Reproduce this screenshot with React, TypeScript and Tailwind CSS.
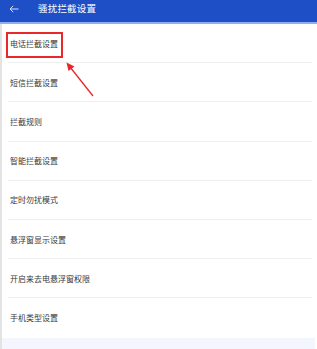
import React from "react";

const items = [
  "电话拦截设置",
  "短信拦截设置",
  "拦截规则",
  "智能拦截设置",
  "定时勿扰模式",
  "悬浮窗显示设置",
  "开启来去电悬浮窗权限",
  "手机类型设置",
];

export default function App() {
  return (
    <div
      className="relative w-[317px] h-[349px] overflow-hidden bg-white flex flex-col"
      style={{ fontFamily: '"Noto Sans CJK SC", "Noto Sans", sans-serif' }}
    >
      <div className="h-[24px] shrink-0 bg-[#1f4fc7] border-b-2 border-[#8eaef0] flex items-center pb-[4px]">
        <span className="ml-[9px] w-[10px] flex items-center">
          <svg width="10" height="8" viewBox="0 0 10 8" fill="none">
            <path d="M9.5 4H1M4.2 0.8L1 4L4.2 7.2" stroke="#d6e0f7" strokeWidth="1" />
          </svg>
        </span>
        <span className="ml-[19px] text-white text-[9.5px] leading-none tracking-[0.2px]">骚扰拦截设置</span>
      </div>
      <div className="flex-1 flex border-l-2 border-[#e3e3e3] border-r-2 border-r-white">
        <div className="flex-1 flex flex-col">
          <div className="flex flex-col">
            {items.map((t, i) => (
              <div key={t} className="h-[39.2px] flex flex-col pl-[6px] pr-[3px]">
                <div className="flex-1 flex items-center pl-[2px] text-[8px] text-[#383838] leading-none pt-[1px]">
                  {t}
                </div>
                {i < items.length - 1 && <div className="h-px bg-[#efefef]" />}
              </div>
            ))}
          </div>
          <div className="flex-1 bg-[#f3f6fc]" />
        </div>
      </div>
      <div className="absolute left-[6px] top-[32px] w-[57px] h-[26px] border-2 border-[#e8282b]" />
      <svg className="absolute left-0 top-0" width="317" height="349" viewBox="0 0 317 349">
        <line x1="93" y1="96" x2="70" y2="67" stroke="#e8282b" strokeWidth="1.3" />
        <polygon points="66.5,62.5 74.5,66.5 68.5,71" fill="#e8282b" />
      </svg>
    </div>
  );
}
